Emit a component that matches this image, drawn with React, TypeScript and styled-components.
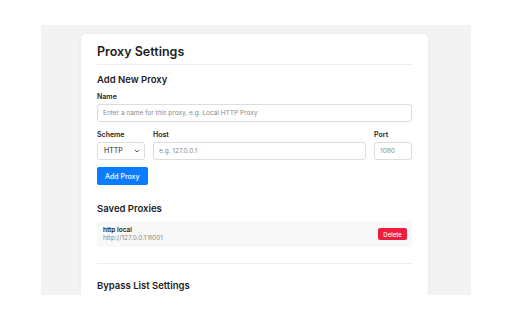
import styled, { createGlobalStyle } from "styled-components";

const GlobalStyle = createGlobalStyle`
  html, body {
    margin: 0;
    padding: 0;
    background: #ffffff;
    font-family: Inter, "Noto Sans", sans-serif;
    color: #1d1d1f;
  }
`;

const Backdrop = styled.div`
  margin: 25px 41px 0;
  height: 270px;
  background: #f3f3f3;
  overflow: hidden;
  padding-top: 9px;
  box-sizing: border-box;
`;

const Card = styled.div`
  margin-left: 40px;
  width: 347px;
  background: #ffffff;
  border-radius: 5px;
  box-shadow: 0 0 4px rgba(0, 0, 0, 0.06);
  padding: 9px 16px 20px;
  box-sizing: border-box;
`;

const Title = styled.h1`
  margin: 0;
  font-size: 12.5px;
  line-height: 17px;
  font-weight: 600;
  padding-bottom: 4px;
  border-bottom: 1px solid #eeeeee;
`;

const SectionTitle = styled.h2<{ $top: number }>`
  margin: ${(p) => p.$top}px 0 0;
  font-size: 9.5px;
  line-height: 13px;
  font-weight: 600;
`;

const Label = styled.label`
  display: block;
  font-size: 7px;
  line-height: 9px;
  font-weight: 600;
  margin-bottom: 3px;
`;

const Field = styled.div<{ $w?: number }>`
  display: flex;
  flex-direction: column;
  ${(p) => (p.$w ? `width: ${p.$w}px; flex: none;` : "flex: 1;")}
`;

const Input = styled.input`
  display: block;
  box-sizing: border-box;
  width: 100%;
  height: 18px;
  border: 1px solid #dddddd;
  border-radius: 3px;
  padding: 0 5px;
  font-family: inherit;
  font-size: 6.5px;
  color: #333;
  background: #fff;
  &::placeholder {
    color: #8a8a8a;
  }
`;

const SelectBox = styled.div`
  box-sizing: border-box;
  height: 18px;
  border: 1px solid #dddddd;
  border-radius: 3px;
  padding: 0 4px 0 6px;
  display: flex;
  align-items: center;
  justify-content: space-between;
  font-size: 7px;
  color: #222;
`;

const NameBlock = styled.div`
  margin-top: 6px;
`;

const Row = styled.div`
  display: flex;
  gap: 8px;
  margin-top: 7.5px;
`;

const PrimaryButton = styled.button`
  display: block;
  margin-top: 7.5px;
  height: 18px;
  padding: 0 8px;
  border: none;
  border-radius: 2px;
  background: #0a7cff;
  color: #fff;
  font-family: inherit;
  font-size: 7px;
  font-weight: 500;
`;

const ProxyItem = styled.div`
  margin-top: 6.5px;
  height: 26px;
  background: #f8f8f8;
  border-radius: 3px;
  display: flex;
  align-items: center;
  justify-content: space-between;
  padding: 0 5px 0 6px;
  box-sizing: border-box;
`;

const ProxyName = styled.div`
  font-size: 6.5px;
  font-weight: 600;
  line-height: 8px;
`;

const ProxyUrl = styled.div`
  font-size: 6.5px;
  color: #888;
  line-height: 8px;
`;

const DangerButton = styled.button`
  height: 12px;
  width: 29px;
  padding: 0;
  border: none;
  border-radius: 2px;
  background: #ee1c3d;
  color: #fff;
  font-family: inherit;
  font-size: 6px;
  font-weight: 500;
`;

const Divider = styled.hr`
  margin: 16px 0 0;
  border: none;
  border-top: 1px solid #eeeeee;
`;

const Chevron = () => (
  <svg width="6" height="4" viewBox="0 0 6 4" fill="none">
    <path d="M0.8 0.8 L3 3 L5.2 0.8" stroke="#333" strokeWidth="0.8" />
  </svg>
);

export default function App() {
  return (
    <>
      <GlobalStyle />
      <Backdrop>
        <Card>
          <Title>Proxy Settings</Title>
          <SectionTitle $top={8}>Add New Proxy</SectionTitle>
          <NameBlock>
            <Label>Name</Label>
            <Input placeholder="Enter a name for this proxy, e.g. Local HTTP Proxy" />
          </NameBlock>
          <Row>
            <Field $w={48}>
              <Label>Scheme</Label>
              <SelectBox>
                HTTP <Chevron />
              </SelectBox>
            </Field>
            <Field>
              <Label>Host</Label>
              <Input placeholder="e.g. 127.0.0.1" />
            </Field>
            <Field $w={38}>
              <Label>Port</Label>
              <Input placeholder="1080" />
            </Field>
          </Row>
          <PrimaryButton>Add Proxy</PrimaryButton>
          <SectionTitle $top={16.5}>Saved Proxies</SectionTitle>
          <ProxyItem>
            <div>
              <ProxyName>http local</ProxyName>
              <ProxyUrl>http://127.0.0.1:8001</ProxyUrl>
            </div>
            <DangerButton>Delete</DangerButton>
          </ProxyItem>
          <Divider />
          <SectionTitle $top={14.5}>Bypass List Settings</SectionTitle>
        </Card>
      </Backdrop>
    </>
  );
}
